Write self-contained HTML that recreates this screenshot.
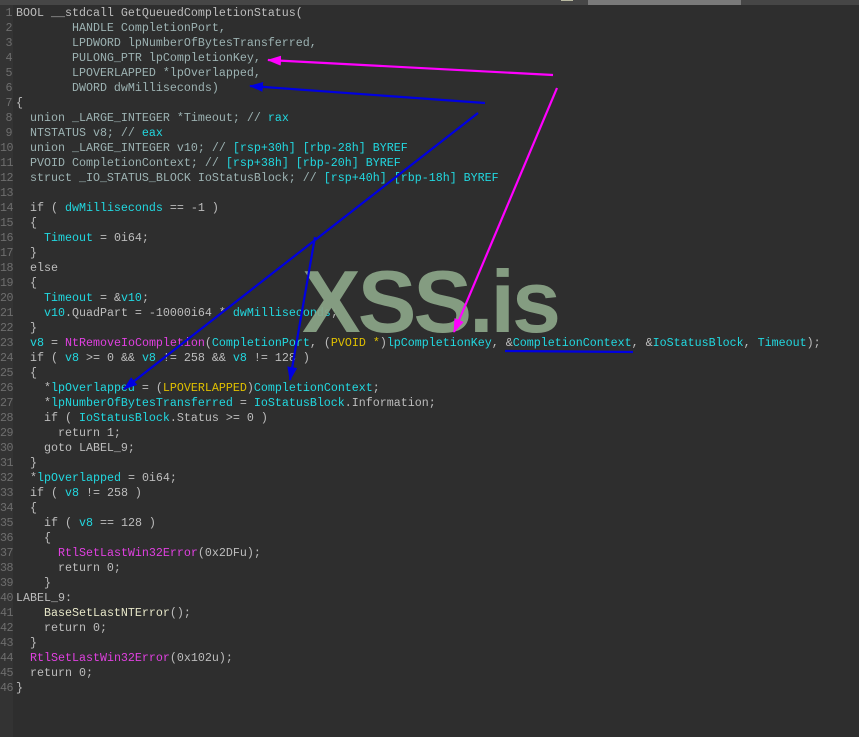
<!DOCTYPE html>
<html><head><meta charset="utf-8"><style>
html,body{margin:0;padding:0;width:859px;height:737px;overflow:hidden;background:#2e2e2e}
.top{position:absolute;left:0;top:0;width:859px;height:5px;background:#464646}
.tab{position:absolute;left:588px;top:0;width:153px;height:5px;background:#7a7a7a}
.tab2{position:absolute;left:561px;top:0;width:12px;height:1px;background:#b8b8a0}
.gut{position:absolute;left:0;top:5px;width:13px;height:732px;background:#333333}
pre{position:absolute;margin:0;top:6px;font-family:"Liberation Mono",monospace;font-size:11.67px;line-height:15px;white-space:pre}
.ln{left:0;color:#6e6e6e;width:12px;text-align:right;letter-spacing:-0.5px}
.code{left:16px;color:#bdbdbd}
.d{color:#9cb2b2}.c{color:#22d8e0}.m{color:#e040e0}.y{color:#e0c000}.f{color:#e6e6c8}
.wm{position:absolute;left:302px;top:252px;font-family:"Liberation Sans",sans-serif;font-weight:bold;font-size:88px;letter-spacing:-3px;color:#8ba588;opacity:.93;line-height:100px}
svg{position:absolute;left:0;top:0}
</style></head><body>
<div class="top"></div><div class="tab"></div><div class="tab2"></div>
<div class="gut"></div>
<pre class="ln">1
2
3
4
5
6
7
8
9
10
11
12
13
14
15
16
17
18
19
20
21
22
23
24
25
26
27
28
29
30
31
32
33
34
35
36
37
38
39
40
41
42
43
44
45
46</pre>
<pre class="code">BOOL __stdcall GetQueuedCompletionStatus(
<span class="d">        HANDLE CompletionPort,
        LPDWORD lpNumberOfBytesTransferred,
        PULONG_PTR lpCompletionKey,
        LPOVERLAPPED *lpOverlapped,
        DWORD dwMilliseconds)</span>
{
<span class="d">  union _LARGE_INTEGER *Timeout; // </span><span class="c">rax</span>
<span class="d">  NTSTATUS v8; // </span><span class="c">eax</span>
<span class="d">  union _LARGE_INTEGER v10; // </span><span class="c">[rsp+30h] [rbp-28h] BYREF</span>
<span class="d">  PVOID CompletionContext; // </span><span class="c">[rsp+38h] [rbp-20h] BYREF</span>
<span class="d">  struct _IO_STATUS_BLOCK IoStatusBlock; // </span><span class="c">[rsp+40h] [rbp-18h] BYREF</span>

  if ( <span class="c">dwMilliseconds</span> == -1 )
  {
    <span class="c">Timeout</span> = 0i64;
  }
  else
  {
    <span class="c">Timeout</span> = &amp;<span class="c">v10</span>;
    <span class="c">v10</span>.QuadPart = -10000i64 * <span class="c">dwMilliseconds</span>;
  }
  <span class="c">v8</span> = <span class="m">NtRemoveIoCompletion</span>(<span class="c">CompletionPort</span>, (<span class="y">PVOID *</span>)<span class="c">lpCompletionKey</span>, &amp;<span class="c">CompletionContext</span>, &amp;<span class="c">IoStatusBlock</span>, <span class="c">Timeout</span>);
  if ( <span class="c">v8</span> &gt;= 0 &amp;&amp; <span class="c">v8</span> != 258 &amp;&amp; <span class="c">v8</span> != 128 )
  {
    *<span class="c">lpOverlapped</span> = (<span class="y">LPOVERLAPPED</span>)<span class="c">CompletionContext</span>;
    *<span class="c">lpNumberOfBytesTransferred</span> = <span class="c">IoStatusBlock</span>.Information;
    if ( <span class="c">IoStatusBlock</span>.Status &gt;= 0 )
      return 1;
    goto LABEL_9;
  }
  *<span class="c">lpOverlapped</span> = 0i64;
  if ( <span class="c">v8</span> != 258 )
  {
    if ( <span class="c">v8</span> == 128 )
    {
      <span class="m">RtlSetLastWin32Error</span>(0x2DFu);
      return 0;
    }
LABEL_9:
    <span class="f">BaseSetLastNTError</span>();
    return 0;
  }
  <span class="m">RtlSetLastWin32Error</span>(0x102u);
  return 0;
}</pre>
<div class="wm">XSS.is</div>
<svg width="859" height="737" viewBox="0 0 859 737">
<defs>
<marker id="am" markerWidth="14" markerHeight="10" refX="13" refY="5" orient="auto" markerUnits="userSpaceOnUse" viewBox="0 0 14 10"><path d="M0,0 L14,5 L0,10 z" fill="#ff00ff"/></marker>
<marker id="ab" markerWidth="14" markerHeight="10" refX="13" refY="5" orient="auto" markerUnits="userSpaceOnUse" viewBox="0 0 14 10"><path d="M0,0 L14,5 L0,10 z" fill="#0000e0"/></marker>
</defs>
<g stroke-width="2.2" fill="none">
<path d="M553,75 L268,60" stroke="#ff00ff" marker-end="url(#am)"/>
<path d="M557,88 L454,332" stroke="#ff00ff" marker-end="url(#am)"/>
<path d="M485,103 L250,86" stroke="#0000e0" marker-end="url(#ab)"/>
<path d="M478,113 L124,389" stroke="#0000e0" marker-end="url(#ab)"/>
<path d="M315,237 L290,380" stroke="#0000e0" marker-end="url(#ab)"/>
<path d="M505,351 L633,352" stroke="#0000e0"/>
</g>
</svg>
</body></html>
